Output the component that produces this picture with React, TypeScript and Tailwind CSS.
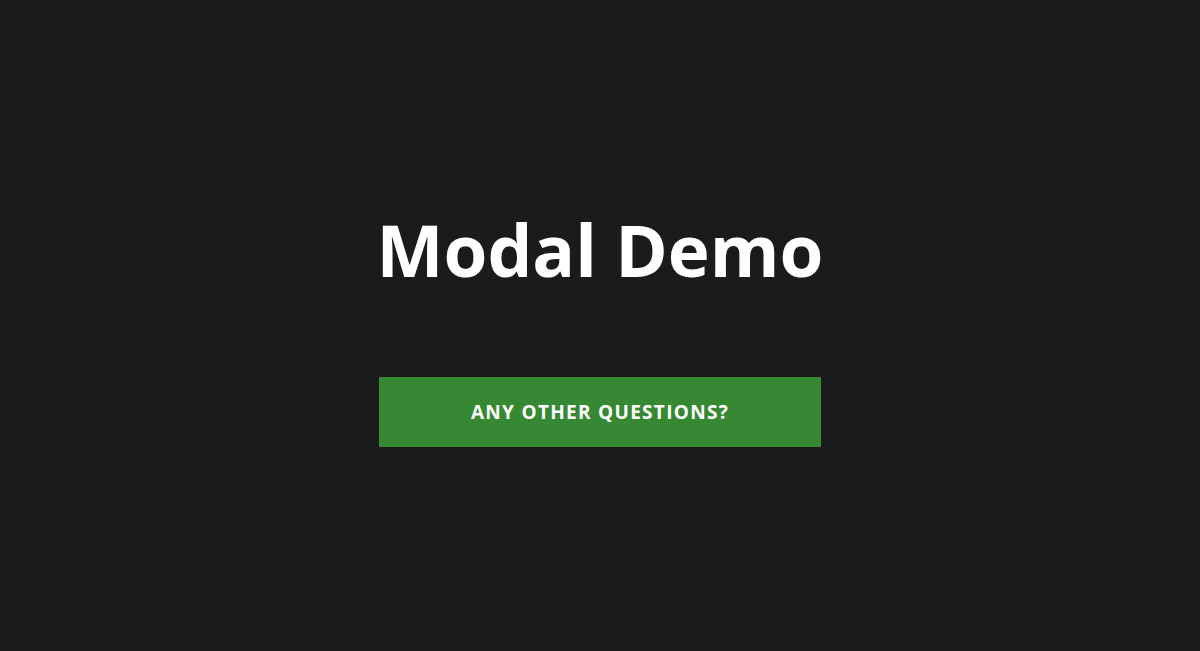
import React from 'react';

export default function App() {
  return (
    <div className="flex h-[651px] w-full flex-col items-center bg-[#1b1b1b] font-['Open_Sans',sans-serif] text-white">
      <h1 className="mt-[209px] text-[71px] font-bold leading-[82px] tracking-[0px]">Modal Demo</h1>
      <button
        type="button"
        className="mt-[86px] h-[70px] w-[442px] bg-[#368833] text-[19px] font-bold uppercase tracking-[1.3px] text-white"
      >
        Any other questions?
      </button>
    </div>
  );
}
